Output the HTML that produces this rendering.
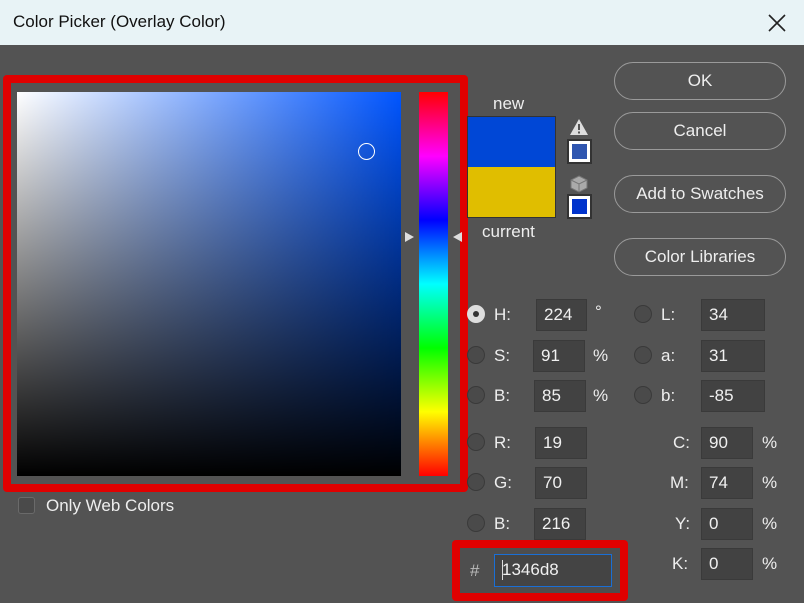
<!DOCTYPE html>
<html><head><meta charset="utf-8"><style>
*{box-sizing:border-box;margin:0;padding:0}
body{width:804px;height:603px;overflow:hidden;background:#535353;font-family:"Liberation Sans","DejaVu Sans",sans-serif;color:#e6e6e6;position:relative}
.a{position:absolute}
.title{left:0;top:0;width:804px;height:45px;background:#e8f3f6;color:#111;font-size:17px}
.btn{position:absolute;left:614px;width:172px;height:38px;border:1.5px solid #9a9a9a;border-radius:19px;text-align:center;line-height:35px;font-size:17px;color:#eee}
.radio{position:absolute;width:18px;height:18px;border-radius:50%;border:1px solid #3a3a3a;background:#4a4a4a}
.lbl{position:absolute;font-size:17px;color:#eee}
.inp{position:absolute;height:32px;background:#424242;border:1px solid #3a3a3a;font-size:17px;line-height:30px;padding-left:7px;color:#f0f0f0}
</style></head><body>
<div class="a" style="left:0;top:0;width:804px;height:3px;background:#3c3c3c"></div>
<div class="a title"><span class="a" style="left:13px;top:12px">Color Picker (Overlay Color)</span>
<svg class="a" style="left:768px;top:14px" width="18" height="18"><path d="M1 1L17 17M17 1L1 17" stroke="#222" stroke-width="1.6"/></svg></div>
<div class="a" style="left:3px;top:75px;width:465px;height:417px;border:8px solid #e00000;border-radius:4px"></div>
<div class="a" style="left:17px;top:92px;width:384px;height:384px;background:linear-gradient(to bottom,rgba(0,0,0,0),#000),linear-gradient(to right,#fff,#0055ff)"></div>
<div class="a" style="left:358px;top:143px;width:17px;height:17px;border:1px solid #fff;border-radius:50%"></div>
<div class="a" style="left:419px;top:92px;width:29px;height:384px;background:linear-gradient(to bottom,#f00,#f0f 16.7%,#00f 33.3%,#0ff 50%,#0f0 66.7%,#ff0 83.3%,#f00)"></div>
<svg class="a" style="left:404px;top:230px" width="60" height="14"><path d="M1 2L10 7L1 12Z" fill="#ddd"/><path d="M58 2L49 7L58 12Z" fill="#ddd"/></svg>
<div class="lbl" style="left:493px;top:94px">new</div>
<div class="a" style="left:467px;top:116px;width:89px;height:102px;border:1px solid #333"><div style="height:50px;background:#0047d6"></div><div style="height:50px;background:#e0be00"></div></div>
<div class="lbl" style="left:482px;top:222px">current</div>
<svg class="a" style="left:569px;top:118px" width="20" height="18"><path d="M10 1L19 17H1Z" fill="#ddd"/><rect x="9" y="6" width="2" height="6" fill="#535353"/><rect x="9" y="13.5" width="2" height="2" fill="#535353"/></svg>
<div class="a" style="left:569px;top:141px;width:21px;height:21px;border:3px solid #fff;outline:2px solid #333;background:#2f56b0"></div>
<svg class="a" style="left:570px;top:175px" width="18" height="18"><path d="M9 1L17 5V13L9 17L1 13V5Z" fill="#aaa" stroke="#777"/><path d="M1 5L9 9L17 5M9 9V17" stroke="#777" fill="none"/></svg>
<div class="a" style="left:569px;top:196px;width:21px;height:21px;border:3px solid #fff;outline:2px solid #333;background:#0033cc"></div>
<div class="btn" style="top:62px">OK</div>
<div class="btn" style="top:112px">Cancel</div>
<div class="btn" style="top:175px">Add to Swatches</div>
<div class="btn" style="top:238px">Color Libraries</div>
<div class="radio" style="left:467px;top:305px;background:#ddd;border-color:#ddd"><div style="width:6px;height:6px;margin:5px;border-radius:50%;background:#333"></div></div>
<div class="lbl" style="left:494px;top:305px">H:</div><div class="inp" style="left:536px;top:299px;width:51px">224</div><div class="lbl" style="left:595px;top:302px">°</div>
<div class="radio" style="left:467px;top:346px"></div><div class="lbl" style="left:494px;top:346px">S:</div><div class="inp" style="left:533px;top:340px;width:52px">91</div><div class="lbl" style="left:593px;top:346px">%</div>
<div class="radio" style="left:467px;top:386px"></div><div class="lbl" style="left:494px;top:386px">B:</div><div class="inp" style="left:534px;top:380px;width:52px">85</div><div class="lbl" style="left:593px;top:386px">%</div>
<div class="radio" style="left:467px;top:433px"></div><div class="lbl" style="left:494px;top:433px">R:</div><div class="inp" style="left:535px;top:427px;width:52px">19</div>
<div class="radio" style="left:467px;top:473px"></div><div class="lbl" style="left:494px;top:473px">G:</div><div class="inp" style="left:535px;top:467px;width:52px">70</div>
<div class="radio" style="left:467px;top:514px"></div><div class="lbl" style="left:494px;top:514px">B:</div><div class="inp" style="left:534px;top:508px;width:52px">216</div>
<div class="radio" style="left:634px;top:305px"></div><div class="lbl" style="left:661px;top:305px">L:</div><div class="inp" style="left:701px;top:299px;width:64px">34</div>
<div class="radio" style="left:634px;top:346px"></div><div class="lbl" style="left:661px;top:346px">a:</div><div class="inp" style="left:701px;top:340px;width:64px">31</div>
<div class="radio" style="left:634px;top:386px"></div><div class="lbl" style="left:661px;top:386px">b:</div><div class="inp" style="left:701px;top:380px;width:64px">-85</div>
<div class="lbl" style="left:673px;top:433px">C:</div><div class="inp" style="left:701px;top:427px;width:52px">90</div><div class="lbl" style="left:762px;top:433px">%</div>
<div class="lbl" style="left:670px;top:473px">M:</div><div class="inp" style="left:701px;top:467px;width:52px">74</div><div class="lbl" style="left:762px;top:473px">%</div>
<div class="lbl" style="left:675px;top:514px">Y:</div><div class="inp" style="left:701px;top:508px;width:52px">0</div><div class="lbl" style="left:762px;top:514px">%</div>
<div class="lbl" style="left:672px;top:554px">K:</div><div class="inp" style="left:701px;top:548px;width:52px">0</div><div class="lbl" style="left:762px;top:554px">%</div>
<div class="a" style="left:452px;top:540px;width:176px;height:61px;border:8px solid #e00000;border-radius:4px;background:#4e4e4e"></div>
<div class="lbl" style="left:470px;top:561px;color:#bbb">#</div>
<div class="inp" style="left:494px;top:554px;width:118px;height:33px;border-color:#1a6fd6;background:#444">1346d8</div>
<div class="a" style="left:502px;top:560px;width:1px;height:20px;background:#ddd"></div>
<div class="a" style="left:18px;top:497px;width:17px;height:17px;border:1px solid #6a6a6a;border-radius:3px;background:#4a4a4a"></div>
<div class="lbl" style="left:46px;top:496px">Only Web Colors</div>
</body></html>
